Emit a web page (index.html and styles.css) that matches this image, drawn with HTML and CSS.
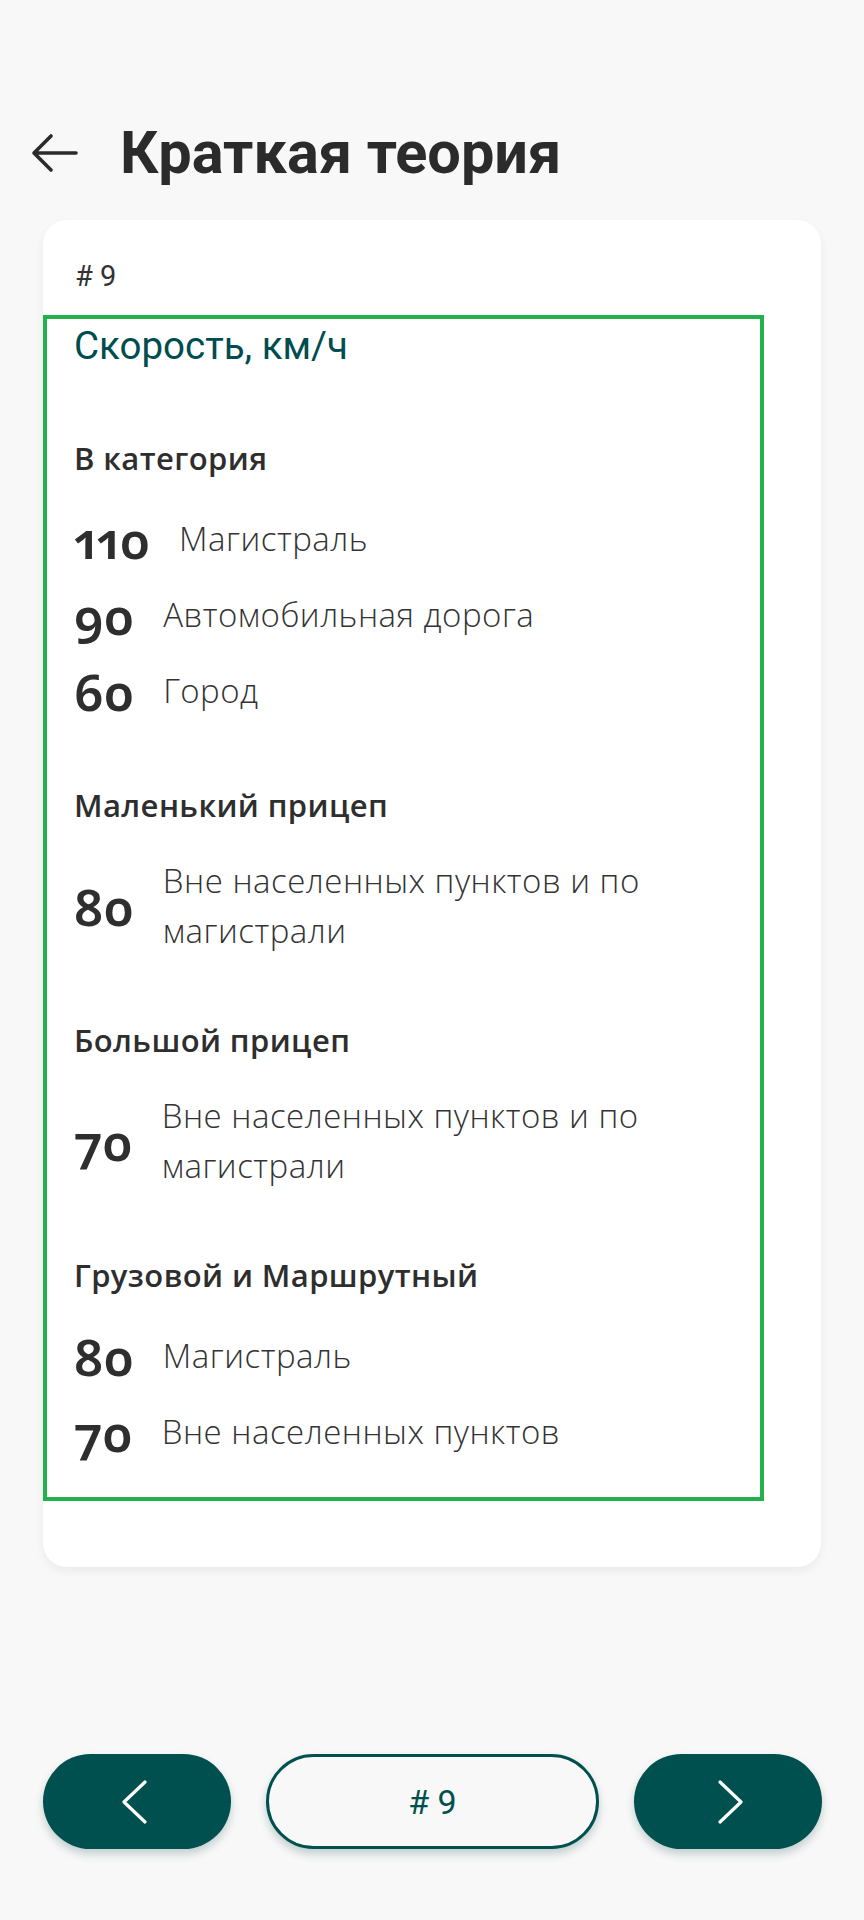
FILE: index.html
```html
<!DOCTYPE html>
<html lang="ru">
<head>
<meta charset="utf-8">
<title>Краткая теория</title>
<link rel="stylesheet" href="styles.css">
</head>
<body>
<div class="page">
  <header class="topbar">
    <svg class="back" width="48" height="40" viewBox="0 0 48 40" aria-hidden="true">
      <path d="M45 20 H4 M20 3 L3 20 L20 37" fill="none" stroke="#2b2b2b" stroke-width="3.6" stroke-linecap="round" stroke-linejoin="round"/>
    </svg>
    <h1 class="title">Краткая теория</h1>
  </header>

  <main class="card">
    <div class="card-num"># 9</div>
    <section class="content">
      <h2 class="topic">Скорость, км/ч</h2>

      <div class="group first">
        <h3 class="group-title">В категория</h3>
        <div class="rows">
          <div class="row"><span class="speed">110</span><span class="desc">Магистраль</span></div>
          <div class="row"><span class="speed">90</span><span class="desc">Автомобильная дорога</span></div>
          <div class="row"><span class="speed">60</span><span class="desc">Город</span></div>
        </div>
      </div>

      <div class="group">
        <h3 class="group-title">Маленький прицеп</h3>
        <div class="rows">
          <div class="row"><span class="speed">80</span><span class="desc">Вне населенных пунктов и по магистрали</span></div>
        </div>
      </div>

      <div class="group">
        <h3 class="group-title">Большой прицеп</h3>
        <div class="rows">
          <div class="row"><span class="speed">70</span><span class="desc">Вне населенных пунктов и по магистрали</span></div>
        </div>
      </div>

      <div class="group">
        <h3 class="group-title">Грузовой и Маршрутный</h3>
        <div class="rows">
          <div class="row"><span class="speed">80</span><span class="desc">Магистраль</span></div>
          <div class="row"><span class="speed">70</span><span class="desc">Вне населенных пунктов</span></div>
        </div>
      </div>
    </section>
  </main>

  <footer class="nav">
    <button class="nav-btn prev" aria-label="Назад">
      <svg width="26" height="44" viewBox="0 0 26 44" aria-hidden="true">
        <path d="M24 2 L3 22 L24 42" fill="none" stroke="#ffffff" stroke-width="3.2" stroke-linecap="round" stroke-linejoin="round"/>
      </svg>
    </button>
    <button class="nav-page"># 9</button>
    <button class="nav-btn next" aria-label="Вперёд">
      <svg width="26" height="44" viewBox="0 0 26 44" aria-hidden="true">
        <path d="M2 2 L23 22 L2 42" fill="none" stroke="#ffffff" stroke-width="3.2" stroke-linecap="round" stroke-linejoin="round"/>
      </svg>
    </button>
  </footer>
</div>
</body>
</html>
```

FILE: styles.css
```css
html, body {
  margin: 0;
  padding: 0;
  background: #f8f8f8;
}

.page {
  min-height: 100vh;
  display: flex;
  flex-direction: column;
  font-family: "Open Sans", "Noto Sans", sans-serif;
}

/* Header */
.topbar {
  display: flex;
  align-items: center;
  padding: 118px 0 0 31px;
  gap: 41px;
}

.back {
  display: block;
  flex: none;
}

.title {
  margin: 0;
  font-family: Roboto, "Noto Sans", sans-serif;
  font-weight: 700;
  font-size: 59.5px;
  line-height: 70px;
  color: #2b2b2b;
}

/* Card */
.card {
  margin: 32px 43px 0;
  background: #ffffff;
  border-radius: 24px;
  box-shadow: 0 4px 10px rgba(0, 0, 0, 0.06);
  padding: 0 0 66px;
}

.card-num {
  padding: 39px 32px 0;
  font-family: Roboto, "Noto Sans", sans-serif;
  font-size: 29px;
  line-height: 34px;
  color: #333333;
}

.content {
  margin-top: 22px;
  width: 721px;
  box-sizing: border-box;
  border: 4px solid #22b14c;
  padding: 5px 28px 35px 27px;
}

.topic {
  margin: 0;
  font-family: Roboto, "Noto Sans", sans-serif;
  font-weight: 400;
  font-size: 38.5px;
  line-height: 44px;
  color: #004d4f;
}

.group {
  margin-top: 64px;
}

.group.first {
  margin-top: 70px;
}

.group-title {
  margin: 0 0 31px;
  font-family: "Open Sans", sans-serif;
  font-weight: 600;
  font-size: 31px;
  line-height: 40px;
  letter-spacing: 0.4px;
  color: #2e2e2e;
}

.rows {
  display: flex;
  flex-direction: column;
  gap: 16px;
}

.row {
  display: flex;
  align-items: center;
}

.speed {
  flex: none;
  margin-right: 29px;
  font-family: "Noto Sans", sans-serif;
  font-weight: 600;
  font-size: 51px;
  line-height: 60px;
  font-variant-numeric: oldstyle-nums proportional-nums;
  color: #2e2e2e;
}

.desc {
  font-family: "Open Sans", sans-serif;
  font-weight: 300;
  font-size: 33px;
  line-height: 50px;
  letter-spacing: 0.5px;
  color: #333333;
}

/* Bottom navigation */
.nav {
  margin-top: auto;
  display: grid;
  grid-template-columns: 188px 1fr 188px;
  column-gap: 35px;
  padding: 0 42px 71px 43px;
}

.nav-btn,
.nav-page {
  height: 95px;
  border-radius: 48px;
  display: flex;
  align-items: center;
  justify-content: center;
  box-shadow: 0 5px 8px rgba(0, 60, 60, 0.22);
  cursor: pointer;
  padding: 0;
}

.nav-btn {
  background: #00504f;
  border: none;
}

.nav-btn svg {
  display: block;
}

.prev svg {
  margin-right: 7px;
}

.next svg {
  margin-left: 5px;
}

.nav-page {
  background: #f8f8f8;
  border: 3px solid #00504f;
  font-family: Roboto, "Noto Sans", sans-serif;
  font-size: 34px;
  color: #00504f;
}
```
